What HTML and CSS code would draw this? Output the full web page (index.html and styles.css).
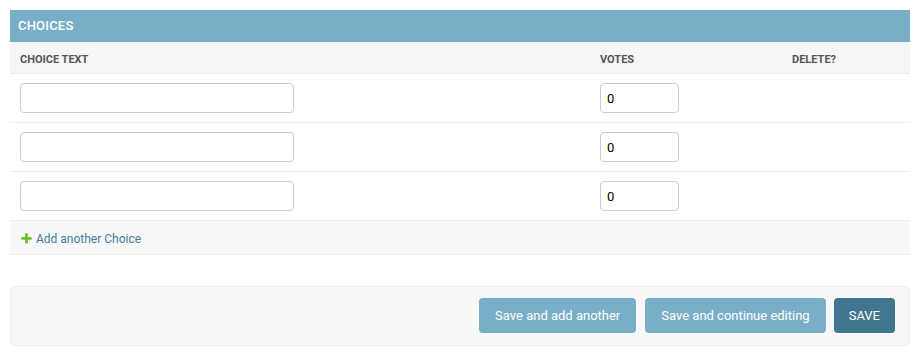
FILE: index.html
```html
<!DOCTYPE html>
<html>
<head>
<meta charset="utf-8">
<link rel="stylesheet" href="styles.css">
</head>
<body>
<div class="inline-group">
  <h2 class="module-title">Choices</h2>
  <div class="grid head">
    <div class="th">Choice text</div>
    <div class="th">Votes</div>
    <div class="th">Delete?</div>
  </div>
  <div class="grid row">
    <div class="td"><input class="text-input" type="text"></div>
    <div class="td"><input class="num-input" type="text" value="0"></div>
    <div class="td"></div>
  </div>
  <div class="grid row">
    <div class="td"><input class="text-input" type="text"></div>
    <div class="td"><input class="num-input" type="text" value="0"></div>
    <div class="td"></div>
  </div>
  <div class="grid row">
    <div class="td"><input class="text-input" type="text"></div>
    <div class="td"><input class="num-input" type="text" value="0"></div>
    <div class="td"></div>
  </div>
  <div class="add-row">
    <a class="add-link" href="#"><svg class="plus" width="13" height="13" viewBox="0 0 1792 1792"><path fill="#70bf2b" d="M1600 796v192q0 40-28 68t-68 28h-416v416q0 40-28 68t-68 28h-192q-40 0-68-28t-28-68v-416h-416q-40 0-68-28t-28-68v-192q0-40 28-68t68-28h416v-416q0-40 28-68t68-28h192q40 0 68 28t28 68v416h416q40 0 68 28t28 68z"/></svg>Add another Choice</a>
  </div>
</div>
<div class="submit-row">
  <button class="btn">Save and add another</button>
  <button class="btn">Save and continue editing</button>
  <button class="btn default">Save</button>
</div>
</body>
</html>
```
FILE: styles.css
```css
* { box-sizing: border-box; }
html, body { margin: 0; padding: 0; }
body {
  padding: 10px;
  font-family: Roboto, "Liberation Sans", Arial, sans-serif;
  font-size: 14px;
  color: #333;
  background: #fff;
}
.inline-group { margin-bottom: 31px; }
.module-title {
  margin: 0;
  padding: 8px;
  font-size: 13px;
  font-weight: 500;
  line-height: 16px;
  letter-spacing: 0.2px;
  text-transform: uppercase;
  color: #fff;
  background: #79aec8;
}
.grid {
  display: grid;
  grid-template-columns: 580px 192px 128px;
}
.head { background: #f6f6f6; border-bottom: 1px solid #eee; }
.th {
  padding: 10px 10px 5px;
  font-size: 11px;
  line-height: 16px;
  font-weight: 700;
  color: #555;
  text-transform: uppercase;
}
.row { border-bottom: 1px solid #eee; }
.td { padding: 9px 10px 9px; height: 48px; }
.text-input, .num-input {
  display: block;
  height: 30px;
  margin: 0;
  padding: 5px 6px;
  border: 1px solid #ccc;
  border-radius: 4px;
  font-family: Roboto, "Liberation Sans", Arial, sans-serif;
  font-size: 13px;
  color: #000;
  background: #fff;
}
.text-input { width: 274px; }
.num-input { width: 79px; }
.add-row {
  padding: 9px 10px 7px;
  background: #f8f8f8;
  border-bottom: 1px solid #eee;
  line-height: 16px;
}
.add-link {
  position: relative;
  display: inline-block;
  padding-left: 16px;
  font-size: 12px;
  color: #447e9b;
  text-decoration: none;
}
.plus { position: absolute; left: 0; top: 1px; }
.submit-row {
  display: flex;
  justify-content: flex-end;
  padding: 11px 14px 12px;
  background: #f8f8f8;
  border: 1px solid #eee;
  border-radius: 4px;
}
.btn {
  height: 35px;
  margin-left: 9px;
  padding: 10px 16px;
  border: none;
  border-radius: 4px;
  font-family: Roboto, "Liberation Sans", Arial, sans-serif;
  font-size: 13px;
  line-height: 15px;
  color: #fff;
  background: #79aec8;
}
.btn.default {
  margin-left: 8px;
  padding: 10px 15px;
  text-transform: uppercase;
  background: #417690;
}
```
